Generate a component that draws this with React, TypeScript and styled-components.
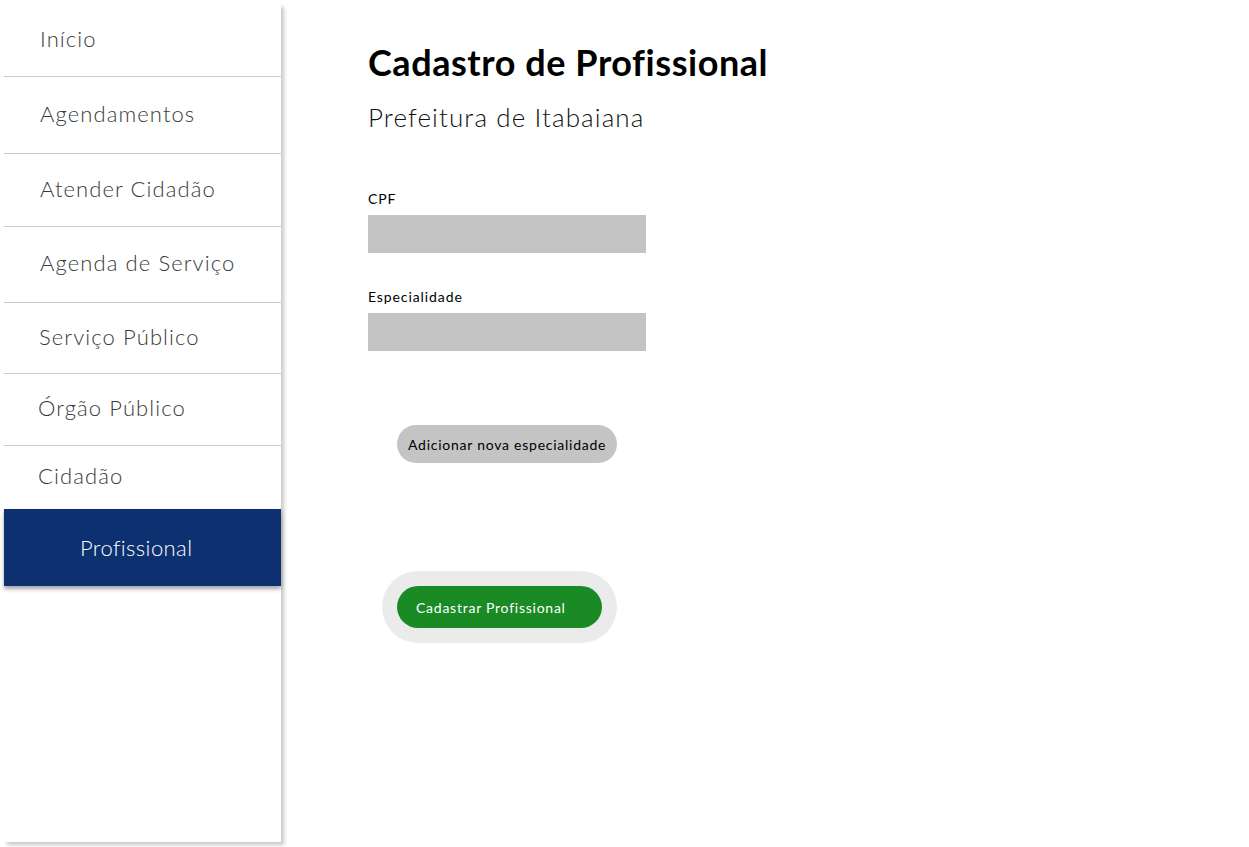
import React from "react";
import styled, { createGlobalStyle } from "styled-components";

const Global = createGlobalStyle`
  html, body { margin: 0; padding: 0; background: #fff; }
  body { font-family: "Lato", "Open Sans", sans-serif; }
  * { box-sizing: border-box; }
`;

const Page = styled.div`
  display: flex;
  align-items: flex-start;
  padding: 4px;
  min-height: 847px;
`;

const Sidebar = styled.nav`
  width: 277px;
  height: 838px;
  flex-shrink: 0;
  background: #fff;
  box-shadow: 3px 3px 4px rgba(0, 0, 0, 0.22);
  display: flex;
  flex-direction: column;
`;

const NavItem = styled.div<{ $h: number; $pl: number; $border?: boolean; $active?: boolean }>`
  height: ${(p) => p.$h}px;
  padding-left: ${(p) => p.$pl}px;
  padding-bottom: ${(p) => (p.$active ? 0 : 4)}px;
  display: flex;
  align-items: center;
  font-size: 22px;
  font-weight: 300;
  letter-spacing: ${(p) => (p.$active ? 0.4 : 1.1)}px;
  color: ${(p) => (p.$active ? "#fff" : "#3a3a3a")};
  background: ${(p) => (p.$active ? "#0d3170" : "transparent")};
  border-bottom: ${(p) => (p.$border ? "1px solid #cccccc" : "none")};
  box-shadow: ${(p) => (p.$active ? "0 3px 4px rgba(0,0,0,0.35)" : "none")};
`;

const Main = styled.main`
  padding: 36px 0 0 87px;
  display: flex;
  flex-direction: column;
`;

const Title = styled.h1`
  margin: 0;
  font-size: 36px;
  font-weight: 700;
  letter-spacing: 0.55px;
  color: #000;
  line-height: 44px;
`;

const Subtitle = styled.h2`
  margin: 17px 0 0;
  font-size: 26px;
  font-weight: 300;
  letter-spacing: 1.1px;
  color: #111;
  line-height: 32px;
`;

const Field = styled.div<{ $mt: number }>`
  margin-top: ${(p) => p.$mt}px;
  display: flex;
  flex-direction: column;
`;

const Label = styled.label`
  font-size: 14px;
  letter-spacing: 0.9px;
  color: #000;
  line-height: 18px;
  margin-bottom: 7px;
`;

const Input = styled.div`
  width: 278px;
  height: 38px;
  background: #c4c4c4;
`;

const AddButton = styled.button`
  margin: 74px 0 0 29px;
  align-self: flex-start;
  height: 38px;
  padding: 0 11px;
  border: none;
  border-radius: 19px;
  background: #c4c4c4;
  color: #000;
  font-family: inherit;
  font-size: 14px;
  letter-spacing: 0.75px;
`;

const SubmitWrap = styled.div`
  margin: 108px 0 0 14px;
  align-self: flex-start;
  width: 235px;
  height: 72px;
  border-radius: 36px;
  background: #ebebeb;
  padding: 15px;
`;

const SubmitButton = styled.button`
  width: 205px;
  height: 42px;
  border: none;
  border-radius: 21px;
  background: #1a8a25;
  color: #fff;
  font-family: inherit;
  font-size: 14px;
  letter-spacing: 0.75px;
  text-align: left;
  padding: 0 0 0 19px;
`;

const items = [
  { label: "Início", h: 73, pl: 36 },
  { label: "Agendamentos", h: 77, pl: 36 },
  { label: "Atender Cidadão", h: 73, pl: 36 },
  { label: "Agenda de Serviço", h: 76, pl: 36 },
  { label: "Serviço Público", h: 71, pl: 35 },
  { label: "Órgão Público", h: 72, pl: 34 },
];

export default function App() {
  return (
    <>
      <Global />
      <Page>
        <Sidebar>
          {items.map((it) => (
            <NavItem key={it.label} $h={it.h} $pl={it.pl} $border>
              {it.label}
            </NavItem>
          ))}
          <NavItem $h={63} $pl={34}>Cidadão</NavItem>
          <NavItem $h={77} $pl={76} $active>Profissional</NavItem>
        </Sidebar>
        <Main>
          <Title>Cadastro de Profissional</Title>
          <Subtitle>Prefeitura de Itabaiana</Subtitle>
          <Field $mt={57}>
            <Label>CPF</Label>
            <Input />
          </Field>
          <Field $mt={35}>
            <Label>Especialidade</Label>
            <Input />
          </Field>
          <AddButton>Adicionar nova especialidade</AddButton>
          <SubmitWrap>
            <SubmitButton>Cadastrar Profissional</SubmitButton>
          </SubmitWrap>
        </Main>
      </Page>
    </>
  );
}
